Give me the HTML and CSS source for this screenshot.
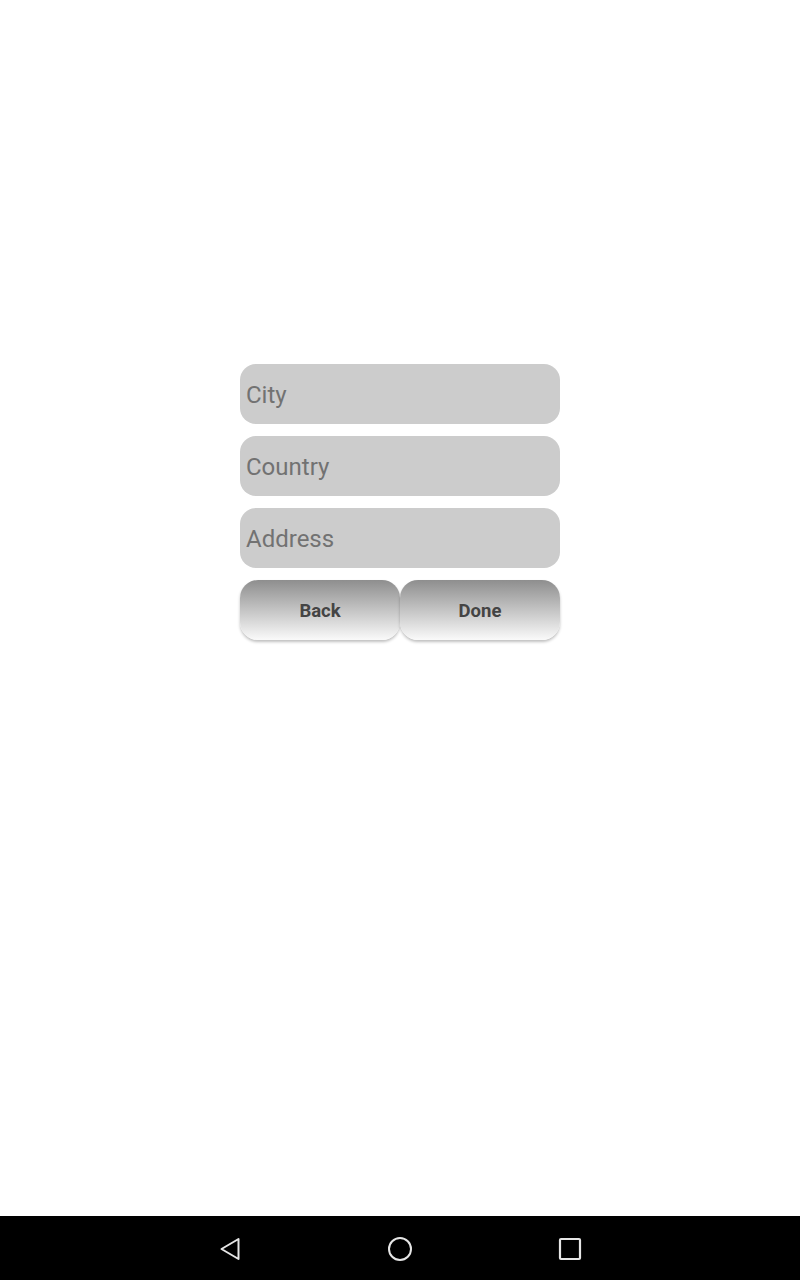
FILE: index.html
```html
<!DOCTYPE html>
<html>
<head>
<meta charset="utf-8">
<link rel="stylesheet" href="styles.css">
</head>
<body>
<main class="screen">
  <form class="form">
    <input class="field" type="text" placeholder="City">
    <input class="field" type="text" placeholder="Country">
    <input class="field" type="text" placeholder="Address">
    <div class="buttons">
      <button type="button" class="btn">Back</button>
      <button type="button" class="btn">Done</button>
    </div>
  </form>
</main>
<nav class="navbar">
  <svg class="nav-icon" width="24" height="24" viewBox="0 0 24 24"><path d="M20.5 2 L20.5 22 L3.5 12 Z" fill="none" stroke="#e6e6e6" stroke-width="2" stroke-linejoin="round"/></svg>
  <svg class="nav-icon" width="24" height="24" viewBox="0 0 24 24"><circle cx="12" cy="12" r="11" fill="none" stroke="#e6e6e6" stroke-width="2"/></svg>
  <svg class="nav-icon" width="24" height="24" viewBox="0 0 24 24"><rect x="2" y="2" width="20" height="20" rx="1" fill="none" stroke="#e6e6e6" stroke-width="2.2"/></svg>
</nav>
</body>
</html>
```

FILE: styles.css
```css
html, body {
  margin: 0;
  padding: 0;
  background: #ffffff;
}
body {
  width: 800px;
  height: 1280px;
  display: flex;
  flex-direction: column;
  font-family: Roboto, "Liberation Sans", sans-serif;
}
.screen {
  flex: 1;
  display: flex;
  justify-content: center;
  align-items: flex-start;
  padding-top: 364px;
}
.form {
  width: 320px;
  display: flex;
  flex-direction: column;
  gap: 12px;
}
.field {
  box-sizing: border-box;
  height: 60px;
  width: 320px;
  border: none;
  border-radius: 16px;
  background: #cccccc;
  padding: 2px 6px 0;
  font-family: Roboto, "Liberation Sans", sans-serif;
  font-size: 24px;
  color: #333;
  outline: none;
}
.field::placeholder {
  color: #727272;
}
.buttons {
  display: flex;
}
.btn {
  box-sizing: border-box;
  width: 160px;
  height: 60px;
  border: none;
  border-radius: 18px;
  background: linear-gradient(to bottom, #8e8e8e 0%, #c4c4c4 50%, #fafafa 100%);
  box-shadow: 0 2px 3px rgba(0,0,0,0.25);
  font-family: Roboto, "Liberation Sans", sans-serif;
  font-weight: 700;
  font-size: 18.5px;
  color: #444444;
  padding: 2px 0 0;
}
.navbar {
  box-sizing: border-box;
  height: 64px;
  padding-top: 1px;
  background: #000000;
  display: flex;
  align-items: center;
  justify-content: center;
  gap: 146px;
}
.nav-icon {
  display: block;
}
```
